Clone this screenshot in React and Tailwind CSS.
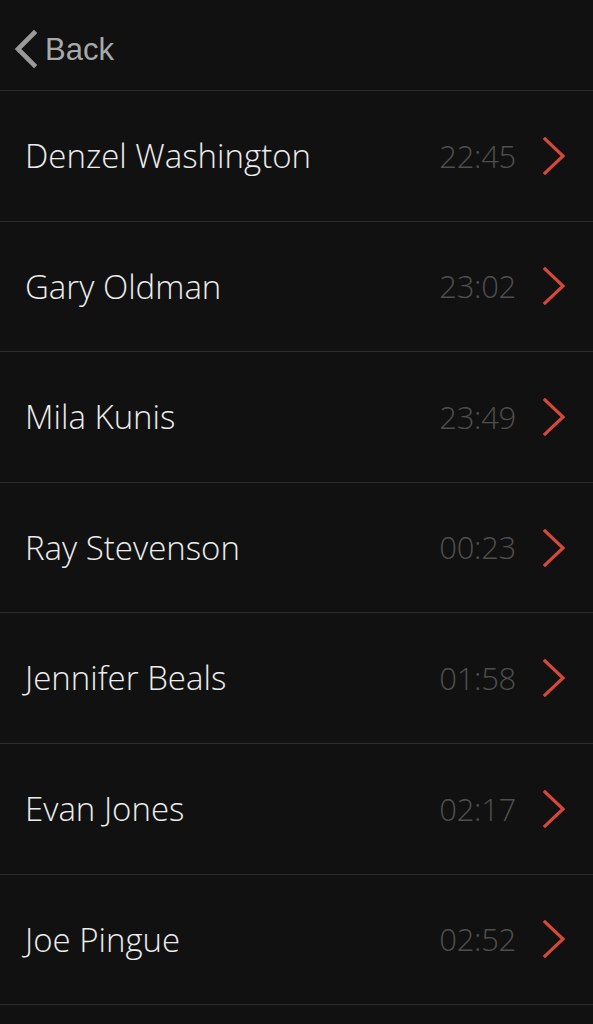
import React from 'react';

const people = [
  { name: 'Denzel Washington', time: '22:45' },
  { name: 'Gary Oldman', time: '23:02' },
  { name: 'Mila Kunis', time: '23:49' },
  { name: 'Ray Stevenson', time: '00:23' },
  { name: 'Jennifer Beals', time: '01:58' },
  { name: 'Evan Jones', time: '02:17' },
  { name: 'Joe Pingue', time: '02:52' },
];

const Chevron = ({ dir = 'right', className, width = 3.2 }) => (
  <svg viewBox="0 0 24 38" className={className} fill="none" stroke="currentColor" strokeWidth={width} strokeLinecap="square">
    {dir === 'right' ? <path d="M3 2 L21 19 L3 36" /> : <path d="M20 3 L4 19 L20 35" />}
  </svg>
);

const App = () => {
  return (
    <div className="min-h-[1024px] w-full bg-[#111111] font-['Open_Sans',sans-serif]">
      <div className="h-[91px] flex items-center pt-[8px] pl-[14px] border-b border-[#2c2c2c]">
        <Chevron dir="left" width={4.6} className="w-[24px] h-[38px] text-[#9a9a9a]" />
        <span className="ml-[7px] text-[31px] text-[#a8a8a8] font-['Liberation_Sans',Arial,sans-serif] leading-none">Back</span>
      </div>
      {people.map((p, idx) => (
        <div key={idx} className="h-[130.6px] flex items-center border-b border-[#2c2c2c] pl-[25px] pr-[27px]">
          <span className="flex-1 text-[33px] font-light text-[#ececec]">{p.name}</span>
          <span className="text-[31px] font-light text-[#4e4e4e] tracking-[-0.3px]">{p.time}</span>
          <Chevron className="ml-[26px] w-[24px] h-[38px] text-[#d5483a]" />
        </div>
      ))}
    </div>
  );
};

export default App;
